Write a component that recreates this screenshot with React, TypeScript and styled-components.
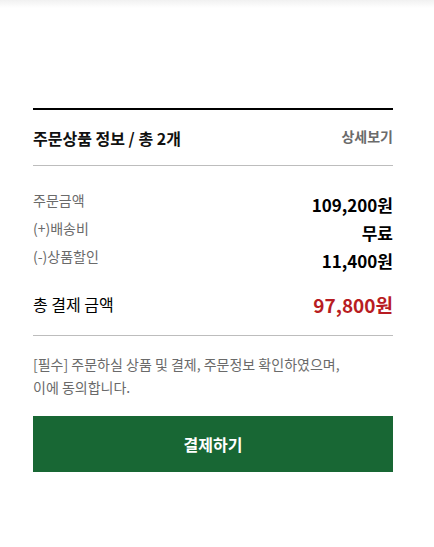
import React from 'react'
import styled, { createGlobalStyle } from 'styled-components'

const GlobalStyle = createGlobalStyle`
  html, body {
    margin: 0;
    padding: 0;
    background: #fff;
    font-family: "Noto Sans CJK KR", "Noto Sans", sans-serif;
  }
`

const rows = [
  { label: '주문금액', value: '109,200원' },
  { label: '(+)배송비', value: '무료' },
  { label: '(-)상품할인', value: '11,400원' },
]

const App = () => {
  return (
    <>
      <GlobalStyle />
      <TopShade />
      <Container>
        <Header>
          <Title>주문상품 정보 / 총 2개</Title>
          <DetailLink>상세보기</DetailLink>
        </Header>
        <Summary>
          {rows.map(row => (
            <Row key={row.label}>
              <Label>{row.label}</Label>
              <Value>{row.value}</Value>
            </Row>
          ))}
          <TotalRow>
            <TotalLabel>총 결제 금액</TotalLabel>
            <TotalValue>97,800원</TotalValue>
          </TotalRow>
        </Summary>
        <Notice>
          [필수] 주문하실 상품 및 결제, 주문정보 확인하였으며,
          <br />
          이에 동의합니다.
        </Notice>
        <PayButton>결제하기</PayButton>
      </Container>
    </>
  )
}

const TopShade = styled.div`
  height: 8px;
  background: linear-gradient(#f1f1f1, #fff);
`

const Container = styled.div`
  width: 360px;
  margin-left: 33px;
  margin-top: 100px;
  border-top: 2px solid #000;
`

const Header = styled.div`
  display: flex;
  justify-content: space-between;
  align-items: center;
  height: 55px;
  border-bottom: 1px solid #bdbdbd;
`

const Title = styled.div`
  font-size: 16px;
  font-weight: 700;
  color: #111;
  margin-top: 1px;
`

const DetailLink = styled.div`
  font-size: 14px;
  font-weight: 700;
  color: #6b6b6b;
  margin-top: -4px;
`

const Summary = styled.div`
  padding-top: 26px;
  padding-bottom: 19px;
  border-bottom: 1px solid #bdbdbd;
`

const Row = styled.div`
  display: flex;
  justify-content: space-between;
  align-items: flex-start;
  height: 28px;
`

const Label = styled.div`
  font-size: 14px;
  line-height: 16px;
  color: #6a6a6a;
`

const Value = styled.div`
  font-size: 17px;
  font-weight: 700;
  line-height: 26px;
  color: #000;
`

const TotalRow = styled.div`
  display: flex;
  justify-content: space-between;
  align-items: center;
  margin-top: 16px;
  height: 24px;
`

const TotalLabel = styled.div`
  font-size: 16px;
  color: #000;
`

const TotalValue = styled.div`
  font-size: 19px;
  font-weight: 700;
  color: #b81c22;
`

const Notice = styled.div`
  margin-top: 17px;
  font-size: 14px;
  line-height: 23px;
  color: #6a6a6a;
`

const PayButton = styled.button`
  display: block;
  width: 100%;
  height: 56px;
  margin-top: 17px;
  border: none;
  background: #186734;
  color: #fff;
  font-family: "Noto Sans CJK KR", "Noto Sans", sans-serif;
  font-size: 16px;
  font-weight: 700;
  cursor: pointer;
`

export default App
